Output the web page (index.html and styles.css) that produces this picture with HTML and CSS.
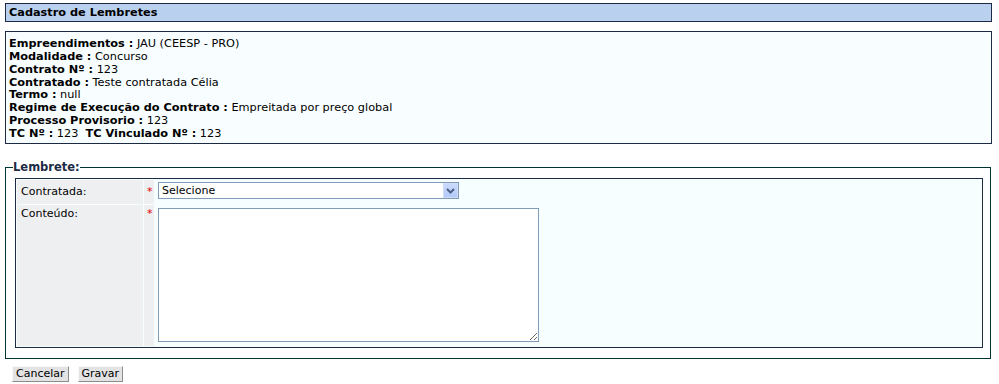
FILE: index.html
```html
<!DOCTYPE html>
<html lang="pt-BR">
<head>
    <meta charset="UTF-8">
    <title>Cadastro de Lembretes</title>
    <link rel="stylesheet" href="styles.css">
</head>
<body>

    <div class="titulo">Cadastro de Lembretes</div>

    <div class="info">
        <p><b>Empreendimentos :</b> JAU (CEESP - PRO)</p>
        <p><b>Modalidade :</b> Concurso</p>
        <p><b>Contrato Nº :</b> 123</p>
        <p><b>Contratado :</b> Teste contratada Célia</p>
        <p><b>Termo :</b> null</p>
        <p><b>Regime de Execução do Contrato :</b> Empreitada por preço global</p>
        <p><b>Processo Provisorio :</b> 123</p>
        <p><b>TC Nº :</b> 123&nbsp; <b>TC Vinculado Nº :</b> 123</p>
    </div>

    <form class="form-lembrete" onsubmit="event.preventDefault();">
        <fieldset>
            <legend>Lembrete:</legend>
            <table class="campos">
                <tr class="linha-combo">
                    <td class="rotulo">Contratada:</td>
                    <td class="obrig">*</td>
                    <td class="valor">
                        <div class="combo">
                            <select>
                                <option>Selecione</option>
                            </select>
                            <span class="combo-btn">
                                <svg width="9" height="6" viewBox="0 0 9 6"><path d="M1 1 L4.5 4.5 L8 1" fill="none" stroke="#4d6185" stroke-width="2"/></svg>
                            </span>
                        </div>
                    </td>
                </tr>
                <tr class="linha-texto">
                    <td class="rotulo">Conteúdo:</td>
                    <td class="obrig">*</td>
                    <td class="valor"><textarea></textarea></td>
                </tr>
            </table>
        </fieldset>

        <div class="botoes">
            <button type="button">Cancelar</button>
            <button type="submit">Gravar</button>
        </div>
    </form>

</body>
</html>
```

FILE: styles.css
```css
* {
    margin: 0;
    padding: 0;
    box-sizing: border-box;
}

body {
    background-color: white;
    font-family: "DejaVu Sans", Verdana, sans-serif;
    font-size: 11px;
    color: #000;
    padding: 3px 7px 0 5px;
}

.titulo {
    background: #b9d1ee;
    border: 1px solid #1c2a44;
    height: 19px;
    padding: 2px 3px 0 3px;
    font-weight: bold;
    font-size: 11.3px;
    color: #000;
}

.info {
    margin-top: 9px;
    background: #f8feff;
    border: 1px solid #1c2a44;
    height: 113px;
    padding: 6px 3px 0 3px;
    font-size: 11.3px;
    line-height: 12.86px;
}

fieldset {
    margin: 16px 1px 0 0;
    border: 1px solid #003333;
    padding: 4px 7px 10px 9px;
}

legend {
    font-weight: bold;
    color: #1c2a44;
    font-size: 11.5px;
    padding: 0;
    margin-left: -2px;
}

.campos {
    width: 100%;
    border: 1px solid #1c2a44;
    border-spacing: 1px;
    background: #f6feff;
    border-collapse: separate;
}

.campos td {
    vertical-align: top;
}

.rotulo {
    width: 126px;
    background: #eeeff1;
    padding: 5px 4px 0 4px;
}

.obrig {
    width: 10px;
    background: #eeeff1;
    color: #e00000;
    padding: 5px 0 0 3px;
}

.valor {
    padding: 2px 0 0 3px;
}

.linha-combo td {
    height: 24px;
}

.linha-texto td {
    height: 141px;
    padding-top: 2px;
}

.linha-texto .obrig {
    padding-top: 2px;
}

.linha-texto .valor {
    padding-top: 3px;
}

.combo {
    position: relative;
    width: 301px;
    height: 17px;
}

.combo select {
    appearance: none;
    width: 301px;
    height: 17px;
    border: 1px solid #7f9db9;
    background: white;
    font-family: "DejaVu Sans", Verdana, sans-serif;
    font-size: 11px;
    padding: 0 3px;
    color: #000;
    outline: none;
}

.combo-btn {
    position: absolute;
    top: 1px;
    right: 1px;
    width: 15px;
    height: 15px;
    background: linear-gradient(#c8d9fc, #b4caf8);
    border: 1px solid #d0dcf6;
    display: flex;
    align-items: center;
    justify-content: center;
}

textarea {
    display: block;
    width: 381px;
    height: 134px;
    border: 1px solid #7f9db9;
    background: white;
    outline: none;
}

.botoes {
    display: flex;
    gap: 9px;
    padding: 7px 0 0 7px;
}

.botoes button {
    height: 16px;
    padding: 0 3px;
    background: #e3e3e3;
    border: 1px solid;
    border-color: #f8f8f8 #8c8c8c #8c8c8c #f8f8f8;
    font-family: "DejaVu Sans", Verdana, sans-serif;
    font-size: 11px;
    line-height: 14px;
    color: #000;
    cursor: pointer;
}
```
